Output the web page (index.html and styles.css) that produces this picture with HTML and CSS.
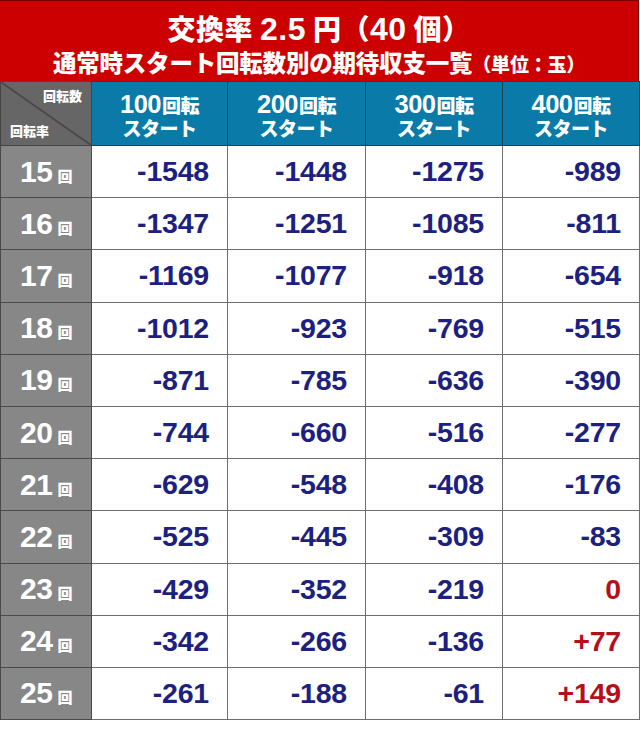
FILE: index.html
```
<!DOCTYPE html>
<html lang="ja">
<head>
<meta charset="utf-8">
<link rel="stylesheet" href="styles.css">
</head>
<body>
<div class="page">
  <header class="banner">
    <div class="title">交換率 <span class="num">2.5</span> 円（<span class="num">40</span> 個）</div>
    <div class="subtitle">通常時スタート回転数別の期待収支一覧<span class="unit">（単位：玉）</span></div>
  </header>
  <table class="grid">
    <colgroup>
      <col class="c0"><col class="c1"><col class="c2"><col class="c3"><col class="c4">
    </colgroup>
    <thead>
      <tr>
        <th class="corner"><span class="ct">回転数</span><span class="cb">回転率</span></th>
        <th class="hd"><div class="l1"><span class="hn">100</span>回転</div><div class="l2">スタート</div></th>
        <th class="hd"><div class="l1"><span class="hn">200</span>回転</div><div class="l2">スタート</div></th>
        <th class="hd"><div class="l1"><span class="hn">300</span>回転</div><div class="l2">スタート</div></th>
        <th class="hd"><div class="l1"><span class="hn">400</span>回転</div><div class="l2">スタート</div></th>
      </tr>
    </thead>
    <tbody>
      <tr><th class="rl">15<span class="k">回</span></th><td>-1548</td><td>-1448</td><td>-1275</td><td>-989</td></tr>
      <tr><th class="rl">16<span class="k">回</span></th><td>-1347</td><td>-1251</td><td>-1085</td><td>-811</td></tr>
      <tr><th class="rl">17<span class="k">回</span></th><td>-1169</td><td>-1077</td><td>-918</td><td>-654</td></tr>
      <tr><th class="rl">18<span class="k">回</span></th><td>-1012</td><td>-923</td><td>-769</td><td>-515</td></tr>
      <tr><th class="rl">19<span class="k">回</span></th><td>-871</td><td>-785</td><td>-636</td><td>-390</td></tr>
      <tr><th class="rl">20<span class="k">回</span></th><td>-744</td><td>-660</td><td>-516</td><td>-277</td></tr>
      <tr><th class="rl">21<span class="k">回</span></th><td>-629</td><td>-548</td><td>-408</td><td>-176</td></tr>
      <tr><th class="rl">22<span class="k">回</span></th><td>-525</td><td>-445</td><td>-309</td><td>-83</td></tr>
      <tr><th class="rl">23<span class="k">回</span></th><td>-429</td><td>-352</td><td>-219</td><td class="pos">0</td></tr>
      <tr><th class="rl">24<span class="k">回</span></th><td>-342</td><td>-266</td><td>-136</td><td class="pos">+77</td></tr>
      <tr><th class="rl">25<span class="k">回</span></th><td>-261</td><td>-188</td><td>-61</td><td class="pos">+149</td></tr>
    </tbody>
  </table>
</div>
</body>
</html>
```
FILE: styles.css
```
* { box-sizing: border-box; }
html, body { margin: 0; padding: 0; background: #fff; }
body {
  font-family: "Liberation Sans", "Noto Sans CJK JP", sans-serif;
  width: 640px;
}
.page { width: 640px; }
.banner {
  height: 81px;
  width: 639px;
  background: #cc0000;
  border-top: 1px solid #7a0000;
  border-right: 1px solid #7a0000;
  color: #fff;
  font-weight: 900;
  text-align: center;
  font-family: "Noto Sans CJK JP", sans-serif;
}
.title {
  font-size: 28px;
  line-height: 32px;
  padding-top: 11px;
  letter-spacing: 0.5px;
}
.title .num {
  font-family: "Liberation Sans", sans-serif;
  font-weight: bold;
  font-size: 32px;
}
.subtitle {
  font-size: 23.5px;
  line-height: 28px;
  padding-top: 3px;
  letter-spacing: -0.2px;
}
.subtitle .unit { font-size: 19px; }
.grid {
  border-collapse: collapse;
  table-layout: fixed;
  width: 639px;
}
.c0 { width: 91px; }
.c1 { width: 136px; }
.c2 { width: 138px; }
.c3 { width: 137px; }
.c4 { width: 137px; }
thead tr { height: 64px; }
.corner {
  position: relative;
  padding: 0;
  border: 1px solid #444;
  background: linear-gradient(to top right, #666 calc(50% - 0.8px), #222 50%, #666 calc(50% + 0.8px));
  font-family: "Noto Sans CJK JP", sans-serif;
  color: #fff;
  font-size: 13px;
  font-weight: 900;
}
.corner .ct { position: absolute; top: 4px; right: 9px; }
.corner .cb { position: absolute; bottom: 5px; left: 9px; }
.hd {
  background: #0a7ba8;
  border: 1px solid #1d3f52;
  color: #fff;
  font-family: "Noto Sans CJK JP", sans-serif;
  font-size: 19px;
  font-weight: 900;
  padding: 0;
  letter-spacing: -0.5px;
}
.hd .l1 { line-height: 28px; height: 28px; }
.hd .l2 { line-height: 20px; height: 20px; }
.hd .hn {
  font-family: "Liberation Sans", sans-serif;
  font-weight: bold;
  font-size: 25.5px;
  letter-spacing: -0.5px;
  margin-right: 1px;
}
tbody tr { height: 52.2px; }
.rl {
  background: #878787;
  border: 1px solid #4a4a4a;
  color: #fff;
  font-size: 30px;
  font-weight: bold;
  text-align: center;
  padding: 0;
  letter-spacing: -0.5px;
}
.rl .k {
  font-family: "Noto Sans CJK JP", sans-serif;
  font-weight: 900;
  font-size: 15px;
  margin-left: 5px;
}
td {
  border: 1px solid #6e6e6e;
  border-top-color: #8a8a8a;
  text-align: right;
  padding: 0 18px 0 0;
  color: #1c217f;
  font-size: 28.5px;
  font-weight: bold;
  letter-spacing: -0.2px;
}
td.pos { color: #b3101c; }
```
